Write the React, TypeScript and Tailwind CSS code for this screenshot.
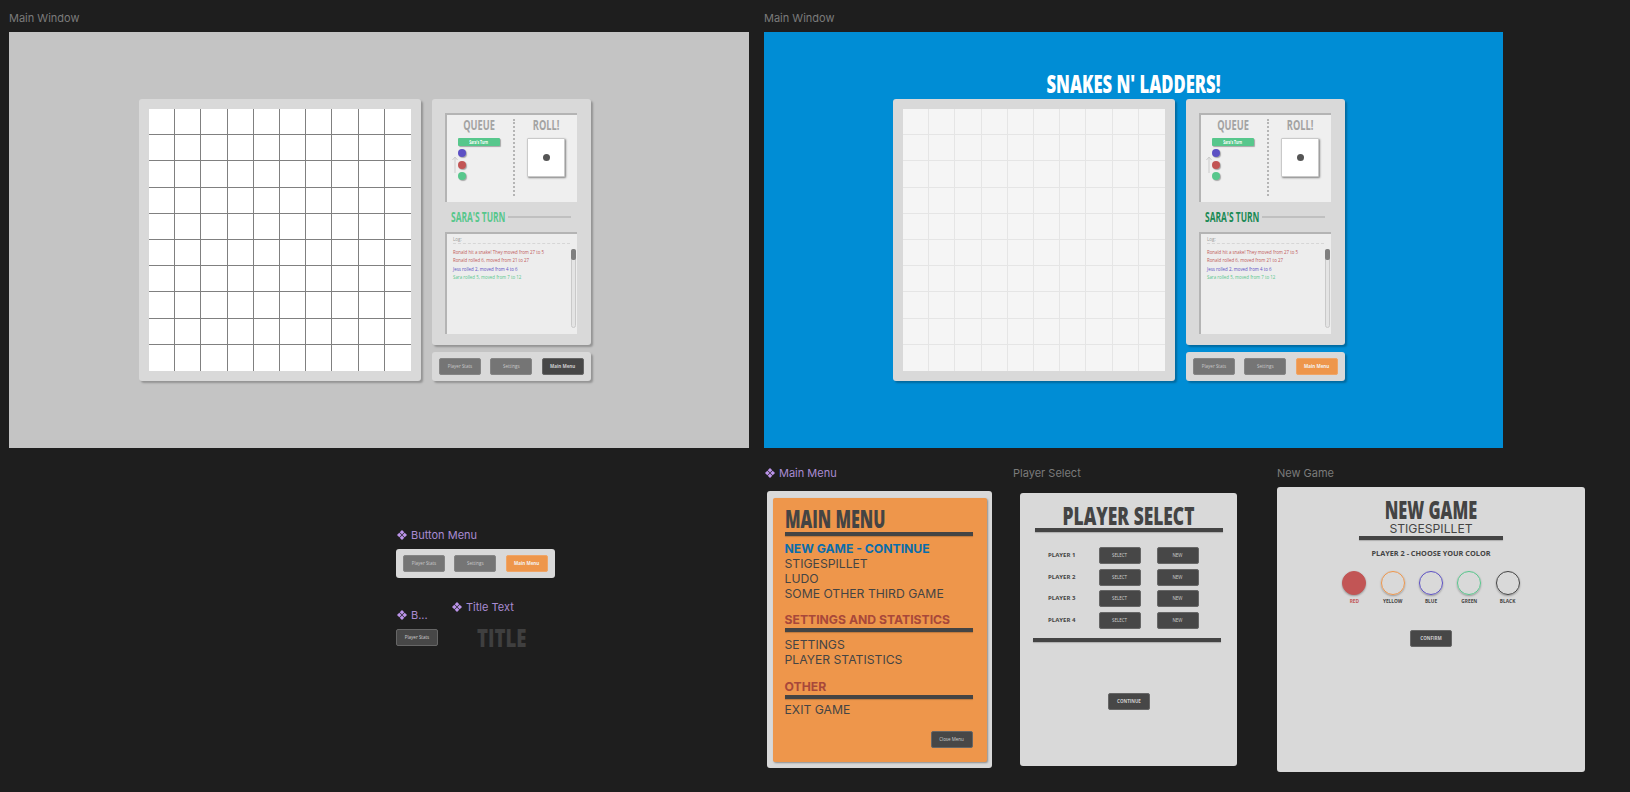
import type { ReactNode } from "react";

const cells = Array.from({ length: 100 }, (_, i) => i);

const logLines = [
	{ text: "Ronald hit a snake! They moved from 27 to 5", color: "text-[#c05a5a]" },
	{ text: "Ronald rolled 6, moved from 21 to 27", color: "text-[#c05a5a]" },
	{ text: "Jess rolled 2, moved from 4 to 6", color: "text-[#5c50c4]" },
	{ text: "Sara rolled 5, moved from 7 to 12", color: "text-[#57c78c]" },
];

const colors = [
	{ name: "RED", ring: "border-[#c25555] bg-[#c25555]", label: "text-[#c25555]" },
	{ name: "YELLOW", ring: "border-[#ee964b]", label: "text-[#444444]" },
	{ name: "BLUE", ring: "border-[#5c50c4]", label: "text-[#444444]" },
	{ name: "GREEN", ring: "border-[#57c78c]", label: "text-[#444444]" },
	{ name: "BLACK", ring: "border-[#444444]", label: "text-[#444444]" },
];

function ComponentIcon() {
	return (
		<svg width="10" height="10" viewBox="0 0 10 10" className="shrink-0 fill-[#bb94ea]">
			<path d="M5 0 7.3 2.3 5 4.6 2.7 2.3Z" />
			<path d="M2.3 2.7 4.6 5 2.3 7.3 0 5Z" />
			<path d="M7.7 2.7 10 5 7.7 7.3 5.4 5Z" />
			<path d="M5 5.4 7.3 7.7 5 10 2.7 7.7Z" />
		</svg>
	);
}

function FrameLabel({ children, component, className }: { children: ReactNode; component?: boolean; className: string }) {
	return (
		<div
			className={`absolute flex items-center font-['Inter',sans-serif] text-[11px] leading-[14px] ${component ? "text-[#a98bd2]" : "text-[#7b7b7b]"} ${className}`}
		>
			{component && (
				<span className="mr-[4px] flex">
					<ComponentIcon />
				</span>
			)}
			{children}
		</div>
	);
}

function Board({ muted }: { muted?: boolean }) {
	return (
		<div className="h-[282px] w-[282px] rounded-[3px] bg-[#d9d9d9] p-[10px] shadow-[2px_2px_2px_rgba(0,0,0,0.25)]">
			<div
				className={`grid h-[262px] w-[262px] grid-cols-10 grid-rows-10 ${muted ? "bg-[#f5f5f5]" : "bg-white"}`}
			>
				{cells.map((i) => (
					<div
						key={i}
						className={`${muted ? "border-[#e5e5e5]" : "border-[#808080]"} ${i % 10 !== 9 ? "border-r" : ""} ${i < 90 ? "border-b" : ""}`}
					/>
				))}
			</div>
		</div>
	);
}

function Heading({ children, className }: { children: ReactNode; className: string }) {
	return <div className={`whitespace-nowrap font-['Open_Sans',sans-serif] ${className}`}>{children}</div>;
}

function Btn({ label, tone, bold }: { label: string; tone: "gray" | "dark" | "orange"; bold?: boolean }) {
	const toneClass = {
		gray: "bg-[#757575] text-[#c9c9c9] border-[#858585]",
		dark: "bg-[#474747] text-[#cfcfcf] border-[#666666]",
		orange: "bg-[#ee964b] text-[#f4f4f4] border-[#f0a566]",
	}[tone];
	return (
		<div
			className={`flex h-[17px] w-[42px] shrink-0 items-center justify-center rounded-[2px] border font-['Open_Sans',sans-serif] text-[4.5px] ${bold ? "font-bold" : ""} ${toneClass}`}
		>
			{label}
		</div>
	);
}

function ButtonMenu({ active, shadow }: { active: "dark" | "orange"; shadow?: boolean }) {
	return (
		<div
			className={`flex h-[29px] w-[159px] items-center gap-[9.3px] rounded-[3px] bg-[#d9d9d9] px-[7px] ${shadow ? "shadow-[2px_2px_2px_rgba(0,0,0,0.25)]" : ""}`}
		>
			<Btn label="Player Stats" tone="gray" />
			<Btn label="Settings" tone="gray" />
			<Btn label="Main Menu" tone={active} bold />
		</div>
	);
}

function SidePanel({ turnColor }: { turnColor: string }) {
	return (
		<div className="h-[246px] w-[159px] rounded-[3px] bg-[#d9d9d9] pl-[13px] pt-[14px] shadow-[2px_2px_2px_rgba(0,0,0,0.25)]">
			<div className="flex h-[89px] w-[132px] bg-[#efefef] shadow-[inset_2px_2px_0_#b4b4b4]">
				<div className="h-full w-[68px] pt-[5px]">
					<Heading className="h-[14px] scale-x-[0.66] text-center text-[14px] font-bold leading-[14px] text-[#a3a3a3]">QUEUE</Heading>
					<div className="ml-[13px] mt-[6px] flex h-[8px] w-[42px] items-center justify-center rounded-[1px] bg-[#57c78c] text-[4.5px] font-bold text-white shadow-[1px_1px_1px_rgba(0,0,0,0.3)]">
						<span className="scale-x-[0.75] font-['Open_Sans',sans-serif]">Sara's Turn</span>
					</div>
					<div className="ml-[7px] mt-[3px] flex">
						<svg width="6" height="17" viewBox="0 0 6 17" className="mt-[7px] shrink-0 fill-none stroke-[#cbcbcb]">
							<path d="M3 17V1M.5 4 3 1l2.5 3" strokeWidth="1" />
						</svg>
						<div className="flex flex-col gap-[3.5px]">
							<div className="h-[8px] w-[8px] rounded-full bg-[#5c50c4] shadow-[1px_1px_1px_rgba(0,0,0,0.3)]" />
							<div className="h-[8px] w-[8px] rounded-full bg-[#c25555] shadow-[1px_1px_1px_rgba(0,0,0,0.3)]" />
							<div className="h-[8px] w-[8px] rounded-full bg-[#57c78c] shadow-[1px_1px_1px_rgba(0,0,0,0.3)]" />
						</div>
					</div>
				</div>
				<div className="mt-[6px] h-[77px] border-l-2 border-dotted border-[#b5b5b5]" />
				<div className="flex flex-1 flex-col items-center pt-[5px]">
					<Heading className="h-[14px] scale-x-[0.66] text-[14px] font-bold leading-[14px] text-[#a3a3a3]">ROLL!</Heading>
					<div className="mt-[6px] flex h-[39px] w-[38px] items-center justify-center rounded-[1px] border border-[#c9c9c9] bg-white shadow-[1px_1px_2px_rgba(0,0,0,0.45)]">
						<div className="h-[7px] w-[7px] rounded-full bg-[#555555]" />
					</div>
				</div>
			</div>
			<div className="flex h-[30px] items-center pl-[6px]">
				<Heading className={`w-[57px] origin-left scale-x-[0.6] text-[14px] font-bold leading-[14px] ${turnColor}`}>
					SARA'S TURN
				</Heading>
				<div className="h-[2px] w-[63px] bg-[#c0c0c0]" />
			</div>
			<div className="relative h-[102px] w-[132px] bg-[#ededed] pl-[8px] pt-[4px] shadow-[inset_2px_2px_0_#b4b4b4]">
				<div className="h-[8px] w-[117px] border-b border-dashed border-[#d6d6d6] font-['Open_Sans',sans-serif] text-[4.5px] leading-[6px] text-[#9a9a9a]">
					Log:
				</div>
				<div className="mt-[5px] flex flex-col gap-[2.4px]">
					{logLines.map((line) => (
						<div
							key={line.text}
							className={`whitespace-nowrap font-['Open_Sans',sans-serif] text-[4.4px] leading-[6px] ${line.color}`}
						>
							{line.text}
						</div>
					))}
				</div>
				<div className="absolute left-[126px] top-[17px] h-[79px] w-[5px] rounded-full border border-[#c9c9c9] bg-[#e4e4e4]">
					<div className="-mx-px -mt-px h-[11px] rounded-[2px] bg-[#7f7f7f]" />
				</div>
			</div>
		</div>
	);
}

function Bar({ className }: { className: string }) {
	return <div className={`h-[4px] bg-[#444444] shadow-[0_1px_1px_rgba(0,0,0,0.2)] ${className}`} />;
}

function MenuItem({ children }: { children: ReactNode }) {
	return <div className="h-[15px] text-[12.2px] leading-[15px] text-[#444444]">{children}</div>;
}

function MainMenu() {
	return (
		<div className="absolute left-[767px] top-[491px] h-[277px] w-[225px] rounded-[3px] bg-[#d9d9d9] pl-[5.5px] pt-[7px]">
			<div className="flex h-[264px] w-[214px] flex-col rounded-[2px] bg-[#ee964b] pl-[12px] pr-[14px] pt-[8px] font-['Inter',sans-serif] shadow-[1px_1px_2px_rgba(0,0,0,0.35)]">
				<Heading className="h-[26px] origin-left scale-x-[0.67] text-[24px] font-extrabold leading-[26px] text-[#444444]">MAIN MENU</Heading>
				<Bar className="" />
				<div className="mt-[5px] h-[15px] text-[12.2px] font-bold leading-[15px] text-[#0a6dab]">NEW GAME - CONTINUE</div>
				<MenuItem>STIGESPILLET</MenuItem>
				<MenuItem>LUDO</MenuItem>
				<MenuItem>SOME OTHER THIRD GAME</MenuItem>
				<div className="mt-[11px] h-[15px] text-[12.2px] font-bold leading-[15px] text-[#a8483a]">SETTINGS AND STATISTICS</div>
				<Bar className="mt-px" />
				<div className="mt-[5px]">
					<MenuItem>SETTINGS</MenuItem>
					<MenuItem>PLAYER STATISTICS</MenuItem>
				</div>
				<div className="mt-[12px] h-[15px] text-[12.2px] font-bold leading-[15px] text-[#a8483a]">OTHER</div>
				<Bar className="mt-px" />
				<div className="mt-[3px]">
					<MenuItem>EXIT GAME</MenuItem>
				</div>
				<div className="mb-[14px] mt-auto self-end">
					<Btn label="Close Menu" tone="dark" />
				</div>
			</div>
		</div>
	);
}

function PlayerSelect() {
	return (
		<div className="absolute left-[1020px] top-[493px] flex h-[273px] w-[217px] flex-col rounded-[3px] bg-[#d9d9d9] pt-[9px]">
			<Heading className="h-[26px] scale-x-[0.695] text-center text-[25px] font-extrabold leading-[26px] text-[#444444]">PLAYER SELECT</Heading>
			<Bar className="ml-[15px] w-[188px]" />
			<div className="ml-[28px] mt-[15px] flex flex-col gap-[4.5px]">
				{[1, 2, 3, 4].map((n) => (
					<div key={n} className="flex h-[17px] items-center">
						<div className="w-[50.5px] font-['Open_Sans',sans-serif] text-[6px] font-bold text-[#444444]">PLAYER {n}</div>
						<Btn label="SELECT" tone="dark" />
						<div className="w-[16px]" />
						<Btn label="NEW" tone="dark" />
					</div>
				))}
			</div>
			<Bar className="ml-[13px] mt-[9px] w-[188px]" />
			<div className="ml-[88px] mt-[51px]">
				<Btn label="CONTINUE" tone="dark" bold />
			</div>
		</div>
	);
}

function NewGame() {
	return (
		<div className="absolute left-[1277px] top-[487px] flex h-[285px] w-[308px] flex-col items-center rounded-[3px] bg-[#d9d9d9] pt-[11px]">
			<Heading className="h-[24px] scale-x-[0.68] text-[24px] font-extrabold leading-[24px] text-[#444444]">NEW GAME</Heading>
			<div className="h-[13px] font-['Inter',sans-serif] text-[12.2px] leading-[13px] text-[#444444]">STIGESPILLET</div>
			<Bar className="mt-px w-[144px]" />
			<div className="mt-[8px] h-[10px] font-['Open_Sans',sans-serif] text-[7.3px] font-bold leading-[10px] text-[#444444]">
				PLAYER 2 - CHOOSE YOUR COLOR
			</div>
			<div className="mt-[13px] flex gap-[14.3px]">
				{colors.map((c) => (
					<div key={c.name} className="flex w-[24px] flex-col items-center">
						<div className={`h-[24px] w-[24px] rounded-full border-[1.5px] ${c.ring} shadow-[0_1px_2px_rgba(0,0,0,0.3)]`} />
						<div className={`mt-[2px] h-[8px] font-['Open_Sans',sans-serif] text-[4.8px] font-bold leading-[8px] ${c.label}`}>{c.name}</div>
					</div>
				))}
			</div>
			<div className="mt-[25px]">
				<Btn label="CONFIRM" tone="dark" bold />
			</div>
		</div>
	);
}

export default function App() {
	return (
		<div className="relative h-[792px] w-[1630px] overflow-hidden bg-[#1e1e1e]">
			<FrameLabel className="left-[9px] top-[11px]">Main Window</FrameLabel>
			<div className="absolute left-[9px] top-[32px] flex h-[416px] w-[740px] gap-[11px] bg-[#c4c4c4] pl-[130px] pt-[67px]">
				<Board />
				<div className="flex flex-col gap-[7px]">
					<SidePanel turnColor="text-[#57c78c]" />
					<ButtonMenu active="dark" shadow />
				</div>
			</div>

			<FrameLabel className="left-[764px] top-[11px]">Main Window</FrameLabel>
			<div className="absolute left-[764px] top-[32px] flex h-[416px] w-[739px] flex-col bg-[#008dd5] pt-[35px]">
				<Heading className="h-[32px] scale-x-[0.665] text-center text-[25px] font-extrabold leading-[32px] text-white">SNAKES N' LADDERS!</Heading>
				<div className="flex gap-[11px] pl-[129px]">
					<Board muted />
					<div className="flex flex-col gap-[7px]">
						<SidePanel turnColor="text-[#1a8a55]" />
						<ButtonMenu active="orange" shadow />
					</div>
				</div>
			</div>

			<FrameLabel component className="left-[397px] top-[528px]">Button Menu</FrameLabel>
			<div className="absolute left-[396px] top-[549px]">
				<ButtonMenu active="orange" />
			</div>

			<FrameLabel component className="left-[397px] top-[608px]">B...</FrameLabel>
			<div className="absolute left-[396px] top-[629px]">
				<Btn label="Player Stats" tone="dark" />
			</div>

			<FrameLabel component className="left-[452px] top-[600px]">Title Text</FrameLabel>
			<Heading className="absolute left-[477px] top-[625px] origin-left scale-x-[0.775] text-[24px] font-extrabold leading-[26px] text-[#3f3f3f]">TITLE</Heading>

			<FrameLabel component className="left-[765px] top-[466px]">Main Menu</FrameLabel>
			<MainMenu />

			<FrameLabel className="left-[1013px] top-[466px]">Player Select</FrameLabel>
			<PlayerSelect />

			<FrameLabel className="left-[1277px] top-[466px]">New Game</FrameLabel>
			<NewGame />
		</div>
	);
}
